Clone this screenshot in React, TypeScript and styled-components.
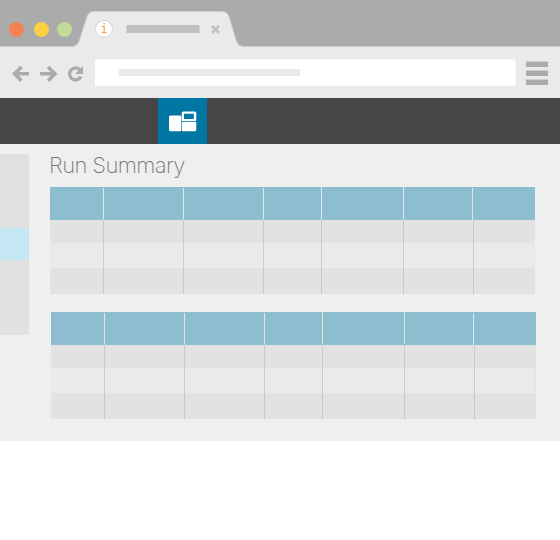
import React from 'react';
import styled, { createGlobalStyle } from 'styled-components';

const GlobalStyle = createGlobalStyle`
  * { box-sizing: border-box; }
  body { margin: 0; background: #fff; font-family: Inter, "Liberation Sans", sans-serif; }
`;

const Window = styled.div`
  width: 560px;
  height: 540px;
  overflow: hidden;
  background: #fff;
`;

const TabStrip = styled.header`
  position: relative;
  display: flex;
  align-items: center;
  height: 47px;
  padding: 11px 0 0 9px;
  background: #ababab;
`;

const TabShape = styled.svg`
  position: absolute;
  left: 0;
  top: 0;
`;

const Lights = styled.div`
  position: relative;
  display: flex;
  gap: 9px;
  width: 86px;
`;

const Light = styled.i<{ $color: string; $gap?: number }>`
  width: 15px;
  height: 15px;
  margin-right: ${(p) => p.$gap ?? 0}px;
  border-radius: 50%;
  background: ${(p) => p.$color};
`;

const Favicon = styled.span`
  position: relative;
  display: flex;
  align-items: center;
  justify-content: center;
  width: 18px;
  height: 18px;
  border-radius: 50%;
  border: 1px solid #d2d2d2;
  background: #fff;
  color: #f9982b;
  font: 12px/16px "DejaVu Sans Mono", monospace;
`;

const TabTitle = styled.span`
  position: relative;
  width: 74px;
  height: 8px;
  margin: 0 11px 0 13px;
  background: #c0c0c0;
  border: solid #d3d3d3;
  border-width: 0 1px;
`;

const TabClose = styled.svg`
  position: relative;
`;

const Toolbar = styled.div`
  display: flex;
  align-items: flex-start;
  height: 51px;
  background: #eaeaea;
`;

const NavIcons = styled.svg`
  flex: none;
  width: 95px;
  height: 51px;
`;

const Address = styled.div`
  width: 421px;
  height: 27px;
  margin-top: 12px;
  padding: 10px 0 0 23px;
  background: #fff;
  border: solid #f5f5f5;
  border-width: 1px 1px 0 0;
`;

const AddressText = styled.div`
  width: 182px;
  height: 7px;
  margin-top: -1px;
  background: #eaeaea;
  border-left: 1px solid #f4f4f4;
`;

const Menu = styled.div`
  display: grid;
  gap: 3px;
  margin: 14px 0 0 10px;
`;

const MenuBar = styled.i<{ $h: number }>`
  width: 22px;
  height: ${(p) => p.$h}px;
  background: #ababab;
  border-top: 1px solid #cecece;
`;

const AppBar = styled.nav`
  height: 46px;
  padding-left: 158px;
  background: #464646;
`;

const AppTile = styled.div`
  width: 49px;
  height: 46px;
  background: #0076a3;
`;

const Content = styled.main`
  display: flex;
  height: 297px;
  padding-top: 10px;
  background: #efefef;
`;

const Sidebar = styled.aside`
  width: 29px;
  height: 181px;
  padding-top: 74px;
  background: #e1e1e1;
`;

const SidebarActive = styled.div`
  height: 32px;
  background: #c5e7f3;
`;

const Report = styled.section`
  padding-left: 21px;
`;

const Title = styled.h1`
  height: 33px;
  margin: 0 0 0 -1px;
  font-size: 22px;
  line-height: 23px;
  font-weight: 250;
  letter-spacing: -0.6px;
  color: #777;
  white-space: nowrap;
`;

const Table = styled.div<{ $indent?: number }>`
  width: 485px;
  margin: 0 0 18px ${(p) => p.$indent ?? 0}px;
`;

const Row = styled.div<{ $kind: 'head' | 'dark' | 'light'; $h: number }>`
  display: grid;
  grid-template-columns: 53px 80px 80px 58px 82px ${(p) => (p.$kind === 'head' ? 69 : 70)}px 1fr;
  height: ${(p) => p.$h}px;
  background: ${(p) => ({ head: '#8cbed0', dark: '#e2e2e2', light: '#eaeaea' })[p.$kind]};
  border-right: ${(p) => (p.$kind === 'light' ? '1px solid #e4e4e4' : '0')};
`;

const Cell = styled.div<{ $line?: string; $top?: number; $bottom?: number }>`
  position: relative;
  &::before {
    content: '';
    display: ${(p) => (p.$line ? 'block' : 'none')};
    position: absolute;
    left: 0;
    top: ${(p) => p.$top ?? 0}px;
    bottom: ${(p) => p.$bottom ?? 0}px;
    width: 1px;
    background: ${(p) => p.$line};
  }
`;

const columns = [0, 1, 2, 3, 4, 5, 6];
const bodyRows = [
  { kind: 'dark', h: 23 },
  { kind: 'light', h: 25 },
  { kind: 'dark', h: 26 },
] as const;

function SummaryTable({ indent, headLines }: { indent?: number; headLines: string[] }) {
  return (
    <Table $indent={indent}>
      <Row $kind="head" $h={33}>
        {columns.map((c) => (
          <Cell
            key={c}
            $line={c ? headLines[c - 1] : undefined}
            $top={c === 4 || c === 5 ? 0 : 1}
            $bottom={c === 6 ? 0 : 1}
          />
        ))}
      </Row>
      {bodyRows.map((row, r) => (
        <Row key={r} $kind={row.kind} $h={row.h}>
          {columns.map((c) => (
            <Cell
              key={c}
              $line={c ? '#cacaca' : undefined}
              $top={r === 0 && c < 6 && !(indent && c === 5) ? -1 : 0}
              $bottom={r === 2 && c > 4 ? -1 : 0}
            />
          ))}
        </Row>
      ))}
    </Table>
  );
}

export default function App() {
  return (
    <Window>
      <GlobalStyle />
      <TabStrip>
        <TabShape width="560" height="47">
          <path
            d="M0 46.5H71C76 46.5 78 44 79.5 40L86.500 18C88 13.500 90 11.500 94 11.500H221C226 11.500 228 13.500 229.500 18L236 40C237.500 44 239.500 46.500 244 46.500H560V48H0Z"
            fill="#eaeaea"
            stroke="#cdcdcd"
            strokeWidth="1"
          />
        </TabShape>
        <Lights>
          <Light $color="#f68254" $gap={1} />
          <Light $color="#fbd142" $gap={-1} />
          <Light $color="#c3db98" />
        </Lights>
        <Favicon>i</Favicon>
        <TabTitle />
        <TabClose width="9" height="9" viewBox="0 0 9 9">
          <path d="M1 1L8 8M8 1L1 8" stroke="#c0c0c0" strokeWidth="2.5" />
        </TabClose>
      </TabStrip>
      <Toolbar>
        <NavIcons viewBox="0 47 95 51" fill="none" stroke="#ababab" strokeWidth="3.6">
          <path d="M29 73.800H15M21.500 67L14.600 73.800L21.500 80.800" />
          <path d="M40 73.800H54.500M48 67L55 73.800L48 80.800" />
          <path d="M80.200 70A6 6 0 1 0 81 76.500" strokeWidth="3.200" />
          <path d="M83 66V74H75Z" fill="#ababab" stroke="none" />
        </NavIcons>
        <Address>
          <AddressText />
        </Address>
        <Menu>
          <MenuBar $h={6} />
          <MenuBar $h={6} />
          <MenuBar $h={6} />
        </Menu>
      </Toolbar>
      <AppBar>
        <AppTile>
          <svg width="49" height="46" viewBox="158 98 49 46">
            <rect x="169" y="115.500" width="12.300" height="15.700" rx="1.500" fill="#fff" />
            <rect x="181.700" y="111.500" width="14.600" height="9.700" rx="1.500" fill="#fff" />
            <rect x="184" y="113.700" width="9.800" height="5.300" fill="#0076a3" />
            <path d="M181.900 122H196.300V129.800Q196.300 131.200 194.900 131.200H181.900Z" fill="#fff" />
          </svg>
        </AppTile>
      </AppBar>
      <Content>
        <Sidebar>
          <SidebarActive />
        </Sidebar>
        <Report>
          <Title>Run Summary</Title>
          <SummaryTable headLines={['#e0e8ea', '#e0e8ea', '#e0e8ea', '#d9eaf0', '#d9eaf0', '#e2e2e0']} />
          <SummaryTable
            indent={1}
            headLines={['#e2e2e0', '#e2e2e0', '#e2e2e0', '#e2e2e0', '#e2e2e0', '#d9eaf0']}
          />
        </Report>
      </Content>
    </Window>
  );
}
